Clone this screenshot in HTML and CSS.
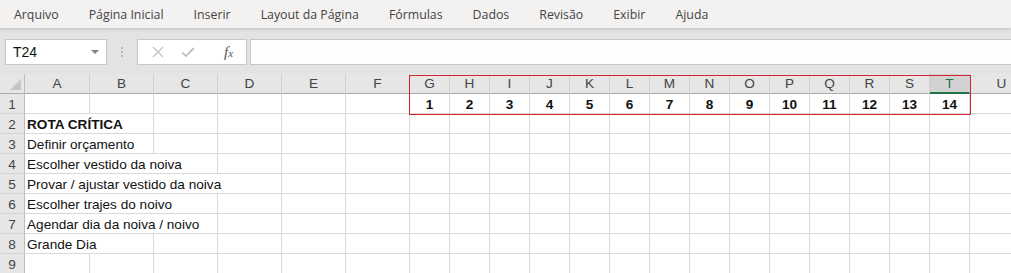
FILE: index.html
```html
<!DOCTYPE html>
<html lang="pt">
<head>
  <meta charset="UTF-8" />
  <title>Rota Crítica</title>
  <link rel="stylesheet" href="styles.css">
</head>
<body>

  <div class="menubar">
    <span>Arquivo</span>
    <span>Página Inicial</span>
    <span>Inserir</span>
    <span>Layout da Página</span>
    <span>Fórmulas</span>
    <span>Dados</span>
    <span>Revisão</span>
    <span>Exibir</span>
    <span>Ajuda</span>
  </div>

  <div class="formula-row">
    <div class="name-box">
      <span>T24</span>
      <span class="caret"></span>
    </div>
    <div class="grip"><i></i><i></i><i></i></div>
    <div class="fx-buttons">
      <svg width="12" height="12" viewBox="0 0 12 12"><path d="M1 1 L11 11 M11 1 L1 11" stroke="#c2c2c2" stroke-width="1.3" fill="none"/></svg>
      <svg width="14" height="12" viewBox="0 0 14 12"><path d="M1 6.5 L5 10 L13 2" stroke="#c2c2c2" stroke-width="1.8" fill="none"/></svg>
      <span class="fx">f<small>x</small></span>
    </div>
    <div class="formula-input"></div>
  </div>

  <div class="sheet">
    <div class="grid" id="grid"></div>
    <div class="range-box"></div>
  </div>

  <script>
    const cols = "ABCDEFGHIJKLMNOPQRSTU".split("");
    const rows = {
      2: { text: "ROTA CRÍTICA", span: 2, bold: true },
      3: { text: "Definir orçamento", span: 2 },
      4: { text: "Escolher vestido da noiva", span: 3 },
      5: { text: "Provar / ajustar vestido da noiva", span: 4 },
      6: { text: "Escolher trajes do noivo", span: 3 },
      7: { text: "Agendar dia da noiva / noivo", span: 3 },
      8: { text: "Grande Dia", span: 2 }
    };

    const grid = document.getElementById("grid");

    function cell(cls, text) {
      const d = document.createElement("div");
      d.className = cls;
      if (text !== undefined) d.textContent = text;
      grid.appendChild(d);
      return d;
    }

    cell("corner");
    cols.forEach(c => cell(c === "T" ? "col-head selected" : "col-head", c));

    for (let r = 1; r <= 9; r++) {
      cell("row-head", r);
      let i = 0;
      while (i < cols.length) {
        const row = rows[r];
        if (row && i === 0) {
          const d = cell(row.bold ? "cell bold" : "cell", row.text);
          d.style.gridColumn = "span " + row.span;
          i += row.span;
          continue;
        }
        if (r === 1 && i >= 6 && i <= 19) {
          cell("cell num", i - 5);
        } else {
          cell("cell");
        }
        i++;
      }
    }
  </script>
</body>
</html>
```

FILE: styles.css
```css
body {
  margin: 0;
  width: 1011px;
  height: 273px;
  overflow: hidden;
  background-color: #e3e3e3;
  font-family: "Liberation Sans", Arial, sans-serif;
}

.menubar {
  height: 28px;
  display: flex;
  align-items: center;
  gap: 30px;
  padding-left: 14px;
  background-color: #f3f2f1;
  color: #444;
  font-family: "Open Sans", "Noto Sans", sans-serif;
  font-size: 12.35px;
  box-shadow: 0 1px 3px rgba(0,0,0,0.18);
  position: relative;
}

.formula-row {
  display: flex;
  align-items: center;
  height: 26px;
  padding: 11px 0 0 5px;
  margin-bottom: 9px;
}

.name-box {
  width: 102px;
  height: 26px;
  box-sizing: border-box;
  background: #fff;
  border: 1px solid #c6c6c6;
  display: flex;
  align-items: center;
  justify-content: space-between;
  padding: 0 7px 0 7px;
  font-size: 14px;
  color: #111;
}

.caret {
  width: 0;
  height: 0;
  border-left: 4px solid transparent;
  border-right: 4px solid transparent;
  border-top: 4px solid #808080;
}

.grip {
  width: 30px;
  display: flex;
  flex-direction: column;
  align-items: center;
  gap: 2px;
}

.grip i {
  width: 2px;
  height: 2px;
  background: #b8b8b8;
}

.fx-buttons {
  width: 110px;
  height: 26px;
  box-sizing: border-box;
  background: #fff;
  border: 1px solid #c6c6c6;
  display: flex;
  align-items: center;
  padding-left: 14px;
  gap: 17px;
}

.fx {
  font-family: "Liberation Serif", serif;
  font-style: italic;
  font-size: 15px;
  color: #555;
  margin-left: 12px;
}

.fx small {
  font-size: 11px;
}

.formula-input {
  flex: 1;
  height: 26px;
  box-sizing: border-box;
  margin-left: 3px;
  background: #fdfdfd;
  border-top: 1px solid #c6c6c6;
  border-bottom: 1px solid #c6c6c6;
  border-left: 1px solid #c6c6c6;
}

.sheet {
  position: relative;
  background: #fff;
}

.grid {
  display: grid;
  grid-template-columns: 25px 65px repeat(5, 64px) repeat(14, 40px) 64px;
  grid-auto-rows: 20px;
  font-size: 13.6px;
  color: #111;
}

.grid > div {
  box-sizing: border-box;
  line-height: 19px;
  white-space: nowrap;
}

.corner {
  background: #e6e6e6;
  border-right: 1px solid #bdbdbd;
  border-bottom: 1px solid #ababab;
  display: flex;
  justify-content: flex-end;
  align-items: flex-end;
  padding: 0 3px 3px 0;
}

.corner::after {
  content: "";
  width: 11px;
  height: 11px;
  background: #c4c4c4;
  clip-path: polygon(100% 0, 100% 100%, 0 100%);
}

.col-head {
  background: #e6e6e6;
  border-right: 1px solid #d0d0d0;
  border-bottom: 1px solid #ababab;
  text-align: center;
  color: #444;
}

.col-head.selected {
  background: #d2d2d2;
  color: #217346;
  border-bottom: 2px solid #217346;
}

.row-head {
  background: #e6e6e6;
  border-right: 1px solid #bdbdbd;
  border-bottom: 1px solid #d4d4d4;
  text-align: center;
  color: #444;
}

.grid > .cell,
.grid > .row-head {
  line-height: 21px;
}

.cell {
  border-right: 1px solid #d9d9d9;
  border-bottom: 1px solid #d9d9d9;
  padding-left: 2px;
}

.bold,
.num {
  font-weight: bold;
}

.num {
  text-align: center;
  padding-left: 0;
}

.range-box {
  position: absolute;
  left: 409px;
  top: 1px;
  width: 562px;
  height: 40px;
  box-sizing: border-box;
  border: 1px solid #d3262d;
  pointer-events: none;
}
```
